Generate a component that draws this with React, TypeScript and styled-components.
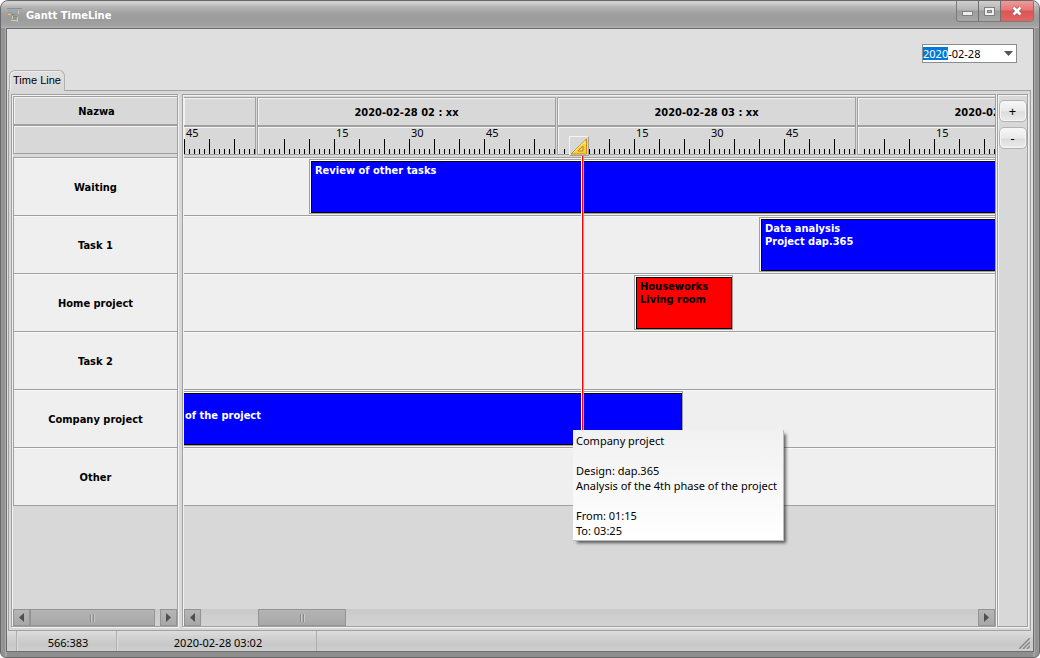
import React, { useEffect, useRef, useState } from "react";
import styled, { createGlobalStyle } from "styled-components";

const LINE = "#a0a0a0";
const FACE = "#d8d8d8";
const MINUTE = 5;
const ORIGIN = 105;
const FONT = '"DejaVu Sans Condensed", "DejaVu Sans", sans-serif';
const TEXT = '"Noto Sans", "Open Sans", sans-serif';

const GlobalStyle = createGlobalStyle`
  *, *::before, *::after { box-sizing: border-box; }
  body { margin: 0; background: #fff; color: #000; font: 11px/13px ${TEXT}; }
  button, input { font: inherit; color: inherit; padding: 0; margin: 0; border: 0; background: none; }
  svg { display: block; }
`;

const Window = styled.div`
  min-height: 100vh;
  display: flex;
  flex-direction: column;
  padding: 0 5px 5px;
  border: 1px solid #686868;
  border-radius: 8px 8px 6px 6px;
  background: linear-gradient(90deg, #9a9a9a 0, #8e8e8e 3px, #b0b0b0 5px, #8e8e8e 6px, #8e8e8e calc(100% - 6px), #b0b0b0 calc(100% - 5px), #8e8e8e calc(100% - 3px), #9a9a9a 100%);
  overflow: hidden;
`;

const TitleBar = styled.header`
  height: 27px;
  flex: none;
  margin: 0 -5px;
  padding: 0 5px 0 6px;
  display: flex;
  align-items: flex-start;
  justify-content: space-between;
  background: linear-gradient(#cdcdcd 0, #d2d2d2 2px, #b4b4b4 6px, #9f9f9f 13px, #9b9b9b 18px, #a3a3a3 25px, #b4b4b4 27px);
`;

const Title = styled.h1`
  margin: 0;
  padding-top: 7px;
  display: flex;
  align-items: center;
  gap: 4px;
  font: bold 11px/16px ${FONT};
  color: #fff;
`;

const WindowButtons = styled.div`
  display: flex;
  border: 1px solid #7a7a7a;
  border-top: 0;
  border-radius: 0 0 4px 4px;
  overflow: hidden;
`;

const WindowButton = styled.button<{ $danger?: boolean }>`
  width: ${(p) => (p.$danger ? 32 : 22)}px;
  height: 20px;
  display: grid;
  place-items: center;
  border-right: ${(p) => (p.$danger ? 0 : 1)}px solid #707070;
  background: ${(p) =>
    p.$danger
      ? "linear-gradient(#ef9a9a 0, #e77676 9px, #dd5555 10px, #e26565 100%)"
      : "linear-gradient(#cfcfcf 0, #b4b4b4 9px, #9c9c9c 10px, #a8a8a8 100%)"};
`;

const Client = styled.main`
  flex: 1;
  display: flex;
  flex-direction: column;
  border: 1px solid #6e6e6e;
  background: #dfdfdf;
`;

const Toolbar = styled.div`
  height: 41px;
  padding: 15px 16px 0;
  display: flex;
  justify-content: flex-end;
  align-items: flex-start;
`;

const DateBox = styled.label`
  width: 95px;
  height: 19px;
  display: flex;
  border: 1px solid #8c8c8c;
  background: #fff;
`;

const DateInput = styled.input`
  flex: 1;
  min-width: 0;
  outline: 0;
  caret-color: transparent;
  &::selection { background: #0078d7; color: #fff; }
`;

const DropButton = styled.button`
  width: 16px;
  display: grid;
  place-items: center;
`;

const Tabs = styled.div`
  height: 20px;
  padding-left: 2px;
  display: flex;
`;

const Tab = styled.button`
  width: 56px;
  height: 21px;
  padding-bottom: 2px;
  position: relative;
  border: 1px solid #b0b0b0;
  border-bottom: 0;
  border-radius: 6px 6px 0 0;
  background: linear-gradient(#e0e0e0, ${FACE});
  box-shadow: inset 1px 1px 0 #ececec;
  font-family: "Liberation Sans", sans-serif;
`;

const Page = styled.section`
  flex: 1;
  margin: 0 2px 0 1px;
  padding: 3px 2px;
  display: flex;
  border: 1px solid ${LINE};
  background: ${FACE};
`;

const Panel = styled.div`
  display: flex;
  flex-direction: column;
  border: 1px solid ${LINE};
  box-shadow: 1px 1px 0 #f2f2f2, inset 1px 1px 0 #f2f2f2;
`;

const NamesPanel = styled(Panel)`
  width: 167px;
  flex: none;
  margin-right: 4px;
  padding: 1px 0 0 1px;
`;

const TimePanel = styled(Panel)`
  flex: 1;
  min-width: 0;
  margin-right: 1px;
  padding: 2px 0 0 1px;
`;

const ZoomPanel = styled(Panel)`
  width: 31px;
  flex: none;
  align-items: center;
  gap: 5px;
  padding-top: 5px;
`;

const HeadCell = styled.div`
  height: 29px;
  padding-top: 2px;
  display: flex;
  align-items: center;
  justify-content: center;
  border: 1px solid ${LINE};
  box-shadow: inset 1px 1px 0 #f2f2f2;
  font: bold 11px/13px ${FONT};
`;

const NameHead = styled(HeadCell)`
  padding-left: 2px;
  border-right: 0;
`;

const NameRows = styled.div`
  margin-top: 3px;
  border-top: 1px solid ${LINE};
  border-left: 1px solid ${LINE};
`;

const Row = styled.div`
  height: 58px;
  border-bottom: 1px solid ${LINE};
  background: #efefef;
  box-shadow: inset 0 1px 0 #f8f8f8;
`;

const NameRow = styled(Row)`
  padding-top: 2px;
  display: flex;
  align-items: center;
  justify-content: center;
  font: bold 11px/13px ${FONT};
`;

const Viewport = styled.div`
  flex: 1;
  position: relative;
  overflow: hidden;
`;

const Hours = styled.div`
  display: flex;
  gap: 1px;
`;

const Hour = styled.div<{ $partial: boolean }>`
  flex: 0 0 ${(p) => (p.$partial ? 72 : 299)}px;
  min-width: 0;

  && > * {
    border-left-width: ${(p) => (p.$partial ? 0 : 1)}px;
  }
`;

const Minutes = styled.div`
  height: 29px;
  border: 1px solid ${LINE};
  box-shadow: inset 1px 1px 0 #f2f2f2;
`;

const MinuteLabels = styled.div<{ $partial: boolean }>`
  height: 12px;
  padding-left: ${(p) => (p.$partial ? 2 : 3)}px;
  display: grid;
  grid-template-columns: ${(p) => (p.$partial ? "1fr" : "75px 75px 75px 1fr")};
  line-height: 11px;
`;

const TaskRows = styled.div`
  margin-top: 2px;
  border-top: 1px solid ${LINE};
`;

const TaskRow = styled(Row)`
  padding-top: 1px;
  overflow: hidden;
`;

const TaskFrame = styled.div<{ $open: boolean }>`
  height: 55px;
  padding: 1px 0 0 ${(p) => (p.$open ? 0 : 1)}px;
  border: 1px solid ${LINE};
  border-left-width: ${(p) => (p.$open ? 0 : 1)}px;
  background: #fff;
`;

const TaskBody = styled.div<{ $fill: string; $ink: string; $open: boolean }>`
  height: 52px;
  padding: 2px ${(p) => (p.$open ? 1 : 3)}px;
  border: 1px solid #000;
  border-left-width: ${(p) => (p.$open ? 0 : 1)}px;
  background: ${(p) => p.$fill};
  color: ${(p) => p.$ink};
  font: bold 11px/13px ${FONT};
  white-space: pre;
`;

const NowLine = styled.div`
  position: absolute;
  top: 59px;
  left: 397px;
  width: 3px;
  height: 350px;
  border: solid;
  border-width: 0 1px;
  border-color: #fff #a8a8a8 #fff #fff;
  background: #f00;
`;

const NowMarker = styled.button`
  position: absolute;
  top: 39px;
  left: 385px;
  width: 20px;
  height: 20px;
  display: grid;
  place-items: center;
  border: 1px solid;
  border-color: #f4f4f4 #a0a0a0 #a0a0a0 #f4f4f4;
  background: ${FACE};
`;

const Tooltip = styled.div`
  position: absolute;
  top: 333px;
  left: 389px;
  width: 211px;
  height: 111px;
  padding: 3px;
  border: solid #bdbdbd;
  border-width: 0 1px 1px 0;
  background: linear-gradient(#f1f1f1, #fff);
  box-shadow: 3px 3px 3px -1px rgba(0, 0, 0, 0.6);
  line-height: 15px;
  white-space: pre;
`;

const ScrollBar = styled.div`
  height: 17px;
  flex: none;
  margin-top: auto;
  display: flex;
  background: linear-gradient(#cacaca, #d2d2d2);
`;

const ScrollButton = styled.button`
  width: 17px;
  flex: none;
  display: grid;
  place-items: center;
  border: 1px solid #949494;
  background: linear-gradient(#b6b6b6, #a8a8a8);
`;

const Track = styled.div<{ $start: number }>`
  flex: 1;
  display: flex;
  padding-left: ${(p) => p.$start}px;
`;

const Thumb = styled.div<{ $width: number }>`
  width: ${(p) => p.$width}px;
  display: grid;
  place-items: center;
  border: 1px solid #949494;
  background: linear-gradient(#b4b4b4, #a8a8a8);
`;

const ZoomButton = styled.button`
  width: 28px;
  height: 22px;
  border: 1px solid #b2b2b2;
  border-radius: 5px;
  background: linear-gradient(#f8f8f8, #e9e9e9 50%, #dcdcdc 55%, #ececec);
  box-shadow: inset 0 0 0 1px #f6f6f6;
  font-size: 13px;
`;

const StatusBar = styled.footer`
  height: 20px;
  flex: none;
  padding-left: 9px;
  display: flex;
  background: linear-gradient(#dedede 0, #d2d2d2 6px, #c8c8c8 14px, #cfcfcf 100%);
`;

const StatusCell = styled.div<{ $width: number }>`
  width: ${(p) => p.$width}px;
  padding: 4px 0 0 3px;
  border-left: 1px solid #b0b0b0;
  box-shadow: inset 1px 0 0 #dcdcdc;
  line-height: 15px;
  text-align: center;
`;

const StatusFill = styled.div`
  flex: 1;
  display: flex;
  justify-content: flex-end;
  align-items: flex-end;
  padding: 0 3px 2px;
  border-left: 1px solid #b0b0b0;
`;

type Task = { start: number; end: number; text: string; fill: string; ink: string };

const ROWS: { name: string; task?: Task }[] = [
  { name: "Waiting", task: { start: 130, end: 300, text: "Review of other tasks", fill: "#00f", ink: "#fff" } },
  { name: "Task 1", task: { start: 220, end: 360, text: "Data analysis\nProject dap.365", fill: "#00f", ink: "#fff" } },
  { name: "Home project", task: { start: 195, end: 215, text: "Houseworks\nLiving room", fill: "#f00", ink: "#000" } },
  { name: "Task 2" },
  { name: "Company project", task: { start: 75, end: 205, text: "\nof the project", fill: "#00f", ink: "#fff" } },
  { name: "Other" },
];

function AppIcon() {
  return (
    <svg width="15" height="16" viewBox="0 0 15 16" shapeRendering="crispEdges">
      <path d="M0 0.5h15" stroke="#8d8d8d" />
      <path d="M1 2.5h10M5 15.5h7" stroke="#74b3c2" />
      <path d="M1 4.5h4" stroke="#e07f6a" />
      <path d="M1 6.5h4" stroke="#e8c48a" />
      <path d="M6 8.5h4M4 6.5h4" stroke="#63987c" />
      <path d="M6 10.5h3" stroke="#d9695b" />
      <path d="M4 12.5h6" stroke="#ecc596" />
      <path d="M11.5 3v3M5.5 8v3M10.5 9v5" stroke="#c6c6c6" />
    </svg>
  );
}

function Arrow({ left }: { left?: boolean }) {
  return (
    <svg width="5" height="9" viewBox="0 0 5 9">
      <path d={left ? "M5 0v9L0 4.500z" : "M0 0v9l5-4.500z"} fill="#505050" />
    </svg>
  );
}

function HScroll({ start, size }: { start: number; size: number }) {
  return (
    <ScrollBar>
      <ScrollButton aria-label="Scroll left"><Arrow left /></ScrollButton>
      <Track $start={start}>
        <Thumb $width={size}>
          <svg width="5" height="8" shapeRendering="crispEdges">
            <path d="M0.5 0v8M3.500 0v8" stroke="#8a8a8a" />
            <path d="M1.500 0v8M4.500 0v8" stroke="#c8c8c8" />
          </svg>
        </Thumb>
      </Track>
      <ScrollButton aria-label="Scroll right"><Arrow /></ScrollButton>
    </ScrollBar>
  );
}

function Ruler({ from, offset }: { from: number; offset: number }) {
  const ticks = Array.from({ length: 60 - from }, (_, i) => from + i);
  return (
    <svg width={offset + ticks.length * MINUTE - 4} height="15" shapeRendering="crispEdges" fill="#000">
      {ticks.map((m, i) => (
        <rect key={m} x={offset + i * MINUTE} y={m % 5 ? 10 : 0} width="1" height={m % 5 ? 5 : 15} />
      ))}
    </svg>
  );
}

function HourColumn({ hour, partial }: { hour: number; partial: boolean }) {
  const labels = partial ? ["45"] : ["", "15", "30", "45"];
  return (
    <Hour $partial={partial}>
      <HeadCell>{partial ? null : `2020-02-28 ${String(hour).padStart(2, "0")} : xx`}</HeadCell>
      <Minutes>
        <MinuteLabels $partial={partial}>
          {labels.map((l) => <span key={l}>{l}</span>)}
        </MinuteLabels>
        <Ruler from={partial ? 45 : 1} offset={partial ? 0 : 6} />
      </Minutes>
    </Hour>
  );
}

function useHourCount() {
  const count = () => Math.ceil((window.innerWidth + 43) / 300);
  const [hours, setHours] = useState(count);
  useEffect(() => {
    const update = () => setHours(count());
    window.addEventListener("resize", update);
    return () => window.removeEventListener("resize", update);
  }, []);
  return hours;
}

export default function App() {
  const hours = useHourCount();
  const dateRef = useRef<HTMLInputElement>(null);

  useEffect(() => {
    dateRef.current?.focus();
    dateRef.current?.setSelectionRange(0, 4);
  }, []);

  return (
    <>
      <GlobalStyle />
      <Window>
        <TitleBar>
          <Title><AppIcon />Gantt TimeLine</Title>
          <WindowButtons>
            <WindowButton aria-label="Minimize">
              <svg width="11" height="12"><rect x="0.5" y="6.500" width="10" height="4" fill="#eee" stroke="#808080" /></svg>
            </WindowButton>
            <WindowButton aria-label="Maximize">
              <svg width="11" height="9"><rect x="0.5" y="0.5" width="10" height="8" fill="#eee" stroke="#808080" /><rect x="3.500" y="3.500" width="4" height="2" fill="#b0b0b0" stroke="#808080" /></svg>
            </WindowButton>
            <WindowButton $danger aria-label="Close">
              <svg width="12" height="10" viewBox="0 0 12 10"><path d="M2.500 1.500l7 7M9.500 1.500l-7 7" stroke="#8d4a4a" strokeWidth="4" /><path d="M2.500 1.500l7 7M9.500 1.500l-7 7" stroke="#fff" strokeWidth="2.800" /></svg>
            </WindowButton>
          </WindowButtons>
        </TitleBar>
        <Client>
          <Toolbar>
            <DateBox>
              <DateInput ref={dateRef} aria-label="Date" defaultValue="2020-02-28" />
              <DropButton aria-label="Open calendar">
                <svg width="9" height="5"><path d="M0 0h9L4.500 5z" fill="#555" /></svg>
              </DropButton>
            </DateBox>
          </Toolbar>
          <Tabs role="tablist">
            <Tab role="tab" aria-selected="true">Time Line</Tab>
          </Tabs>
          <Page>
            <NamesPanel>
              <NameHead>Nazwa</NameHead>
              <NameHead />
              <NameRows>
                {ROWS.map((r) => <NameRow key={r.name}>{r.name}</NameRow>)}
              </NameRows>
              <HScroll start={0} size={125} />
            </NamesPanel>
            <TimePanel>
              <Viewport>
                <Hours>
                  {Array.from({ length: hours }, (_, i) => (
                    <HourColumn key={i} hour={i + 1} partial={i === 0} />
                  ))}
                </Hours>
                <TaskRows>
                  {ROWS.map(({ name, task }) => {
                    if (!task) return <TaskRow key={name} />;
                    const open = task.start < ORIGIN;
                    const start = Math.max(task.start, ORIGIN);
                    return (
                      <TaskRow key={name}>
                        <TaskFrame
                          $open={open}
                          style={{
                            marginLeft: (start - ORIGIN) * MINUTE,
                            width: (task.end - start) * MINUTE - 1,
                          }}
                        >
                          <TaskBody $fill={task.fill} $ink={task.ink} $open={open}>{task.text}</TaskBody>
                        </TaskFrame>
                      </TaskRow>
                    );
                  })}
                </TaskRows>
                <NowLine />
                <NowMarker aria-label="Current time">
                  <svg width="18" height="17" viewBox="0 0 18 17">
                    <path d="M1 16L16.500 1v15z" fill="#f8cf3a" stroke="#c98e12" />
                    <path d="M3.500 14.500L15 3.500v3" fill="none" stroke="#fdf0a0" />
                    <path d="M8 13l5-5v5z" fill="#e3d7b0" stroke="#c08410" />
                  </svg>
                </NowMarker>
                <Tooltip role="tooltip">{"Company project\n\nDesign: dap.365\nAnalysis of the 4th phase of the project\n\nFrom: 01:15\nTo: 03:25"}</Tooltip>
              </Viewport>
              <HScroll start={57} size={88} />
            </TimePanel>
            <ZoomPanel>
              <ZoomButton aria-label="Zoom in">+</ZoomButton>
              <ZoomButton aria-label="Zoom out">-</ZoomButton>
            </ZoomPanel>
          </Page>
          <StatusBar>
            <StatusCell $width={100}>566:383</StatusCell>
            <StatusCell $width={200}>2020-02-28 03:02</StatusCell>
            <StatusFill>
              <svg width="11" height="11">
                <path d="M0 11L11 0M4 11l7-7M8 11l3-3" stroke="#8a8a8a" strokeWidth="1.500" />
              </svg>
            </StatusFill>
          </StatusBar>
        </Client>
      </Window>
    </>
  );
}
